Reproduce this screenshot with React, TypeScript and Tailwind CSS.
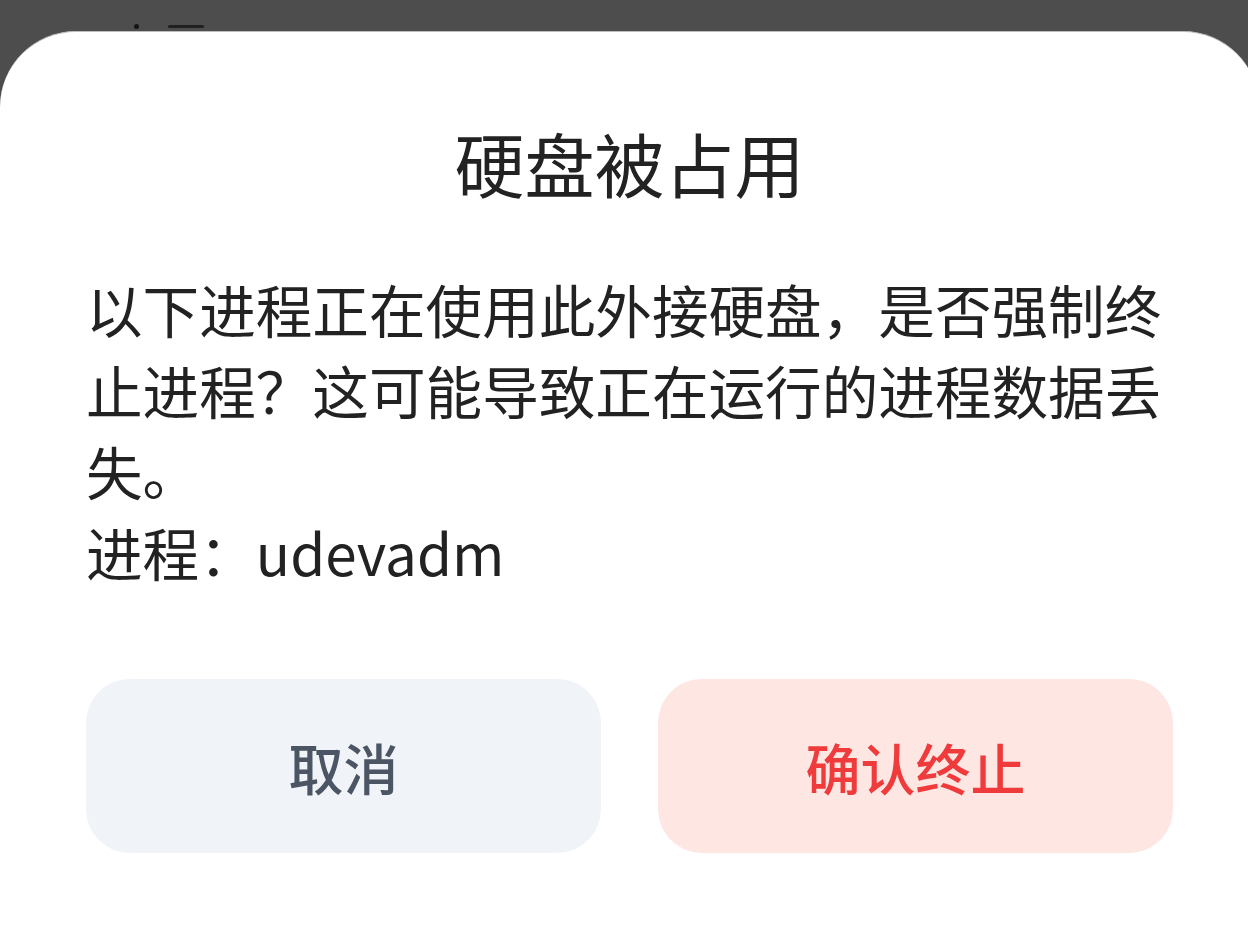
const cjk = { fontFamily: '"Noto Sans CJK SC", "Noto Sans", sans-serif' };

export default function App() {
  return (
    <div className="w-[1248px] h-[948px] overflow-hidden bg-[#4d4d4d] flex flex-col" style={cjk}>
      {/* status bar remnants */}
      <div className="h-[31px] shrink-0 flex items-end gap-[29px] pl-[134px] pb-[2px]">
        <div className="w-[5px] h-[5px] rounded-full bg-[#151515]" />
        <div className="w-[36px] h-[3px] rounded-full bg-[#202020] mb-[1px]" />
      </div>

      {/* sheet */}
      <div className="w-[1259px] flex-1 bg-white rounded-t-[76px] border-t border-[#bdbdbd] flex flex-col px-[86px]">
        <h1 className="mt-[90px] text-center text-[70px] leading-[82px] font-normal text-[#222222]">
          硬盘被占用
        </h1>

        <p className="mt-[64px] text-[56.6px] leading-[81px] text-[#222222]">
          以下进程正在使用此外接硬盘，是否强制终止进程？这可能导致正在运行的进程数据丢失。
          <br />
          进程：udevadm
        </p>

        <div className="mt-[87px] flex gap-[57px]">
          <button className="flex-1 h-[174px] rounded-[44px] bg-[#f0f3f8] text-[#4b5563] text-[55px] font-medium">
            取消
          </button>
          <button className="flex-1 h-[174px] rounded-[44px] bg-[#fee6e3] text-[#ef3b3b] text-[55px] font-medium">
            确认终止
          </button>
        </div>
      </div>
    </div>
  );
}
